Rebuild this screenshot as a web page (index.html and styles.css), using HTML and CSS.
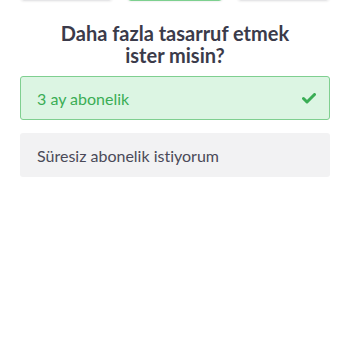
FILE: index.html
```html
<!DOCTYPE html>
<html lang="tr">
<head>
  <meta charset="UTF-8" />
  <meta name="viewport" content="width=device-width, initial-scale=1.0"/>
  <title>Abonelik</title>
  <link rel="stylesheet" href="styles.css">
</head>
<body>
  <div class="plans">
    <div class="plan"></div>
    <div class="plan selected"></div>
    <div class="plan"></div>
  </div>

  <h2 class="question">Daha fazla tasarruf etmek<br>ister misin?</h2>

  <div class="options">
    <div class="option selected">
      <span>3 ay abonelik</span>
      <svg class="check" width="14" height="11" viewBox="0 0 14 11">
        <path d="M1.5 5.5 L5 9 L12.5 1.5" fill="none" stroke="#3aad55" stroke-width="3" stroke-linecap="round" stroke-linejoin="round"/>
      </svg>
    </div>
    <div class="option">
      <span>Süresiz abonelik istiyorum</span>
    </div>
  </div>
</body>
</html>
```

FILE: styles.css
```css
body {
  margin: 0;
  font-family: 'Lato', sans-serif;
  font-variant-ligatures: none;
  background: #fff;
  color: #3b3b4a;
}

.plans {
  display: flex;
  justify-content: space-between;
  padding: 0 20px 0 20px;
  margin-top: -39px;
}
.plan {
  width: 93px;
  height: 40px;
  border: 1px solid #e6e6e8;
  border-radius: 4px;
  box-shadow: 0 1px 2px rgba(0,0,0,0.06);
  box-sizing: border-box;
}
.plan.selected {
  width: 96px;
  border: 1px solid #7dd08f;
}

.question {
  margin: 21px 0 0;
  text-align: center;
  font-size: 20px;
  line-height: 22px;
  font-weight: 700;
  color: #3b3b4a;
}

.options {
  display: flex;
  flex-direction: column;
  gap: 13px;
  padding: 10px 20px 0 20px;
}
.option {
  display: flex;
  justify-content: space-between;
  align-items: center;
  height: 42px;
  padding: 0 13px 0 16px;
  border: 1px solid transparent;
  border-radius: 3px;
  background: #f2f2f3;
  font-size: 16px;
  color: #4a4a58;
}
.option.selected {
  background: #dcf5e3;
  border-color: #7fcf90;
  color: #3aad55;
}
.check {
  display: block;
}
```
